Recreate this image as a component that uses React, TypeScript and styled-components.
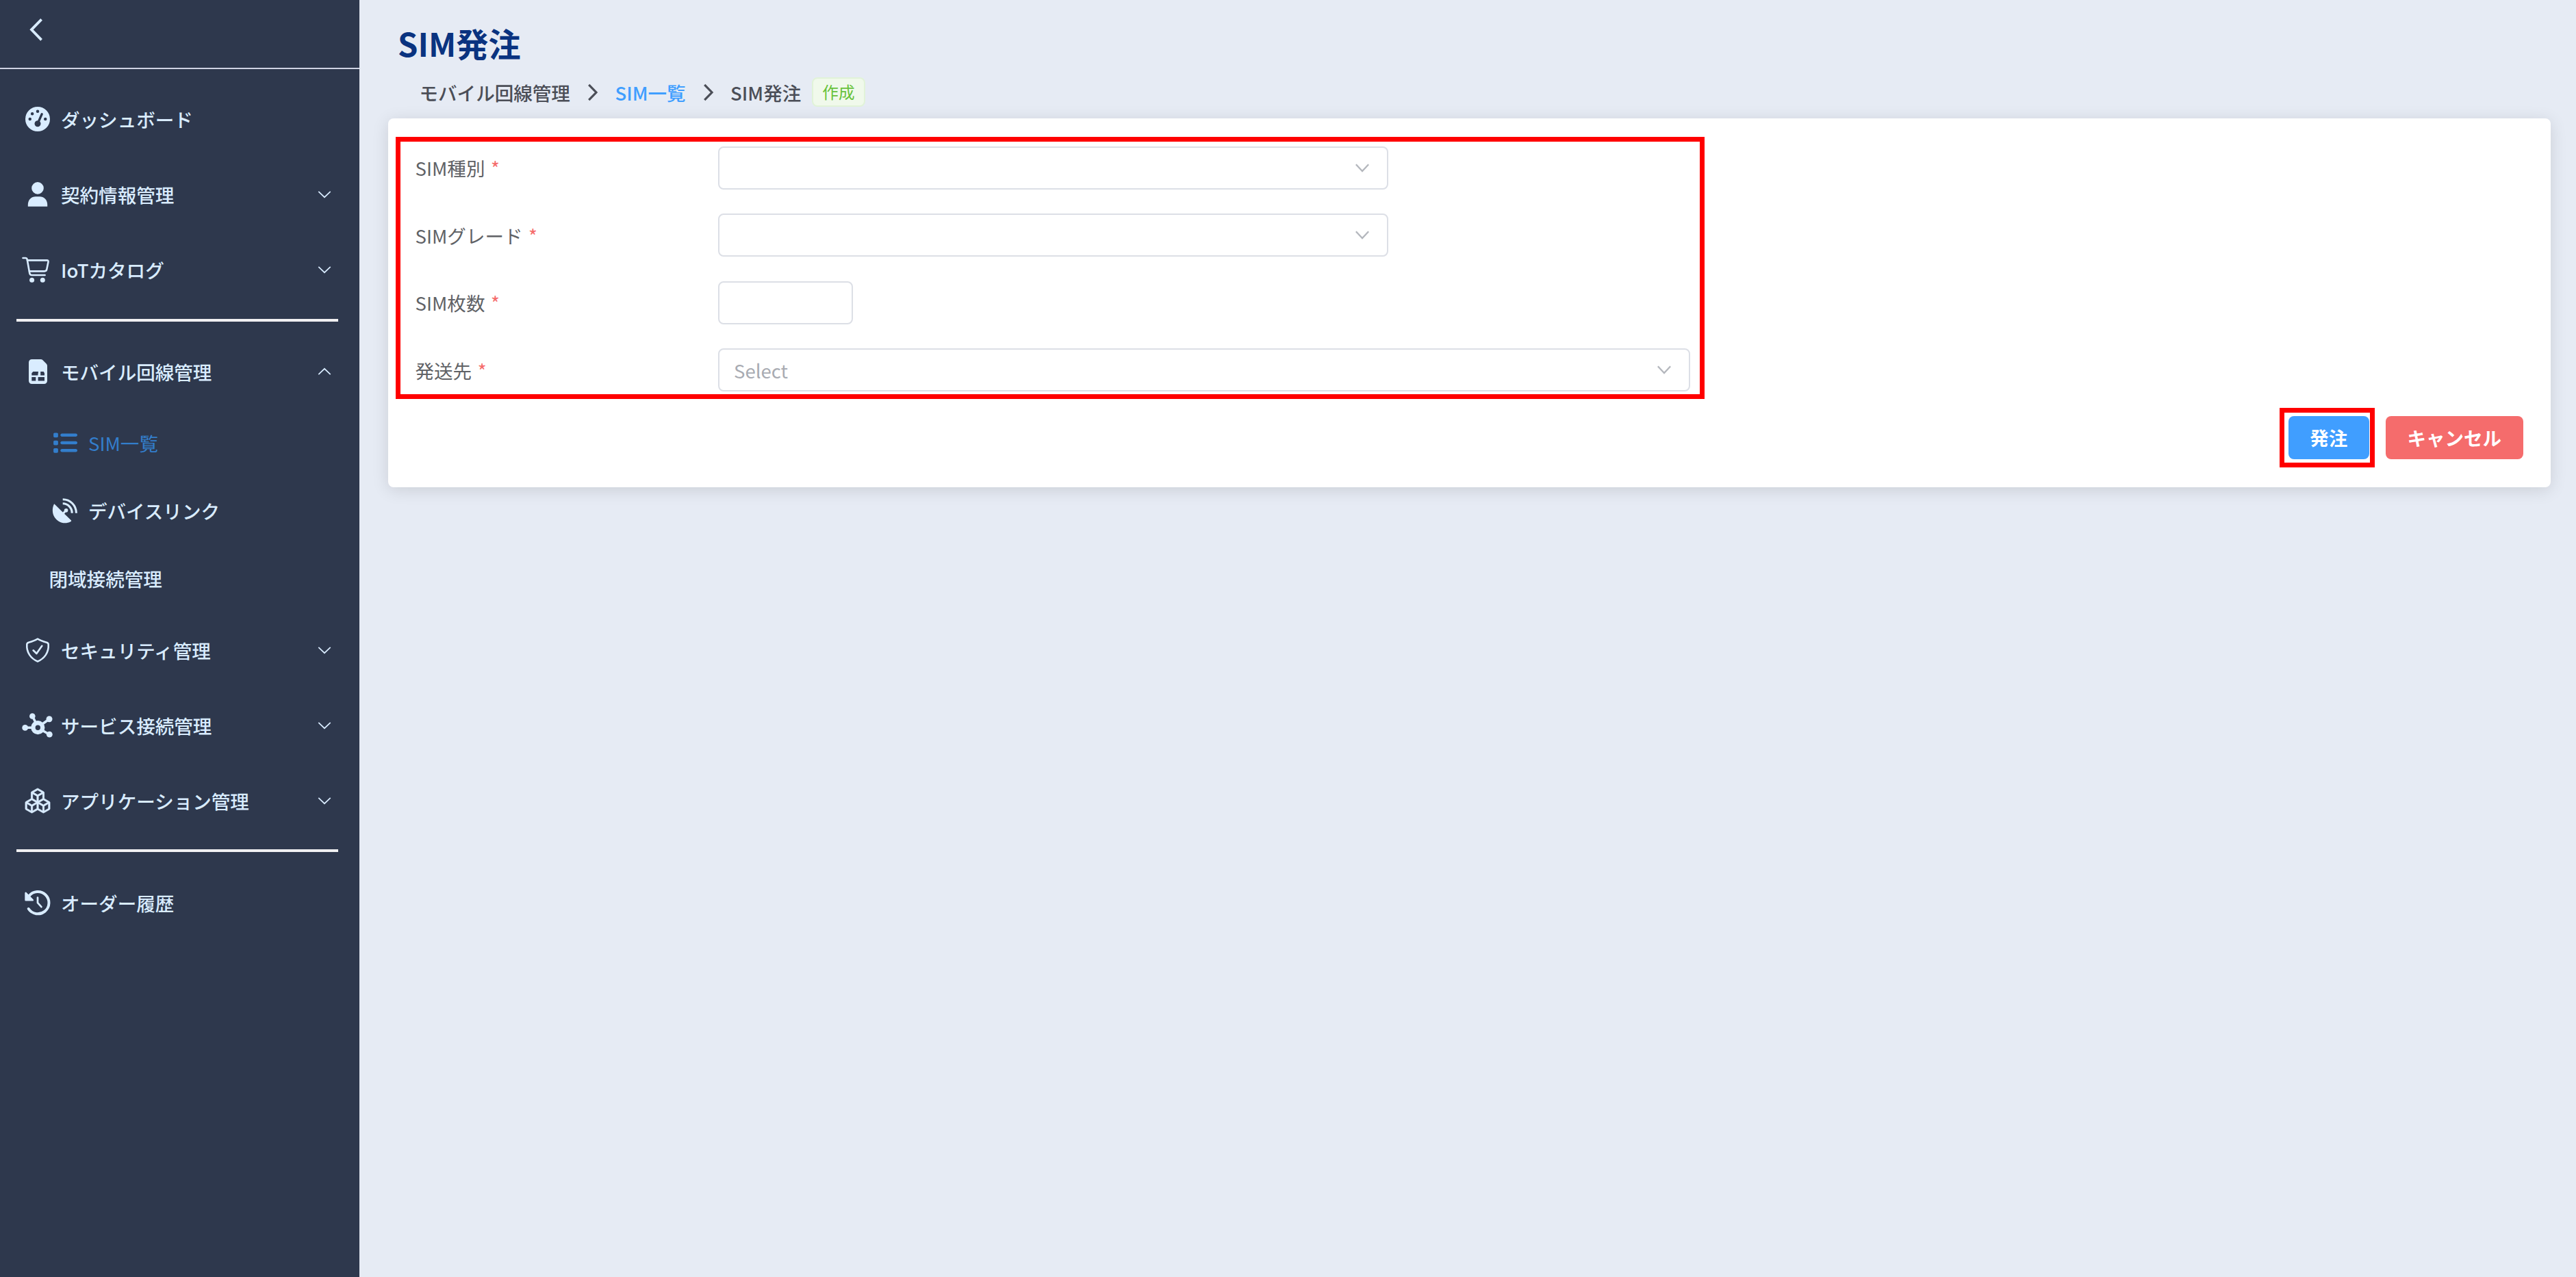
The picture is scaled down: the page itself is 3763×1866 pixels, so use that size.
import React from 'react'
import styled, { createGlobalStyle } from 'styled-components'
import { FaGaugeHigh, FaList } from 'react-icons/fa6'
import { BsBoxes } from 'react-icons/bs'

const GlobalStyle = createGlobalStyle`
  * {
    box-sizing: border-box;
  }
  body {
    margin: 0;
    background: #e6ebf4;
    font-family: "Noto Sans CJK JP", "Noto Sans", sans-serif;
    font-size: 27.55px;
    color: #606266;
  }
`

const Layout = styled.div`
  display: flex;
  min-height: 100vh;
`

// ---- sidebar ----
const Sidebar = styled.aside`
  width: 525px;
  flex: none;
  background: #2e384d;
  color: #d9ecff;
`

const SidebarHeader = styled.div`
  height: 101px;
  padding: 27px 0 0 43px;
  border-bottom: 2px solid #cfd3e2;
  margin-bottom: 17.5px;
  svg {
    display: block;
  }
`

const MenuRow = styled.div<{ $sub?: boolean; $active?: boolean; $plain?: boolean }>`
  display: flex;
  align-items: center;
  height: ${({ $sub }) => ($sub ? '98.75px' : '110.4px')};
  padding-left: ${({ $sub, $plain }) => ($plain ? '71.5px' : $sub ? '71.5px' : '31.5px')};
  padding-right: 41px;
  color: ${({ $active }) => ($active ? '#337ecc' : '#d9ecff')};
  font-weight: ${({ $active }) => ($active ? 400 : 500)};
  white-space: nowrap;
`

const MenuIcon = styled.span`
  display: flex;
  align-items: center;
  justify-content: center;
  width: 47px;
  height: 38px;
  margin-right: 10.5px;
  svg {
    flex: none;
    overflow: visible;
  }
`

const MenuLabel = styled.span`
  flex: 1;
`

const Divider = styled.hr`
  width: 470px;
  height: 4px;
  margin: 16px 0 18px 23.5px;
  border: 0;
  background: #f0f0f2;
`

// ---- content ----
const Content = styled.main`
  flex: 1;
  padding: 28px 37px 0 41.5px;
`

const Title = styled.h1`
  margin: 0 0 16px 14.5px;
  font-size: 47.2px;
  line-height: 69px;
  font-weight: 700;
  color: #0a3380;
`

const Breadcrumb = styled.nav`
  display: flex;
  align-items: center;
  height: 43px;
  margin: 0 0 17px 46px;
  color: #4b4e57;
  font-weight: 500;
  line-height: 42px;
  svg {
    margin: 0 24px 0 25.5px;
  }
`

const Crumb = styled.span<{ $link?: boolean }>`
  color: ${({ $link }) => ($link ? '#409eff' : 'inherit')};
`

const Tag = styled.span`
  margin-left: 16px;
  padding: 0 13px;
  height: 43px;
  line-height: 39px;
  border: 2px solid #e1f3d8;
  border-radius: 8px;
  background: #f0f9eb;
  color: #67c23a;
  font-size: 23.6px;
  font-weight: 400;
`

const Card = styled.section`
  position: relative;
  height: 538.5px;
  padding: 40.6px 40px 40px 40px;
  border-radius: 8px;
  background: #fff;
  box-shadow: 0 4px 24px rgba(0, 0, 0, 0.12);
`

const FormRow = styled.div`
  display: flex;
  align-items: center;
  height: 63px;
  margin-bottom: 35.6px;
`

const FormLabel = styled.label`
  width: 442px;
`

const Required = styled.span`
  margin-left: 8.5px;
  color: #f56c6c;
`

const Field = styled.div<{ $width: number }>`
  display: flex;
  align-items: center;
  justify-content: space-between;
  width: ${({ $width }) => $width}px;
  height: 63px;
  padding: 0 26px 0 21.5px;
  border: 2px solid #dcdfe6;
  border-radius: 8px;
  color: #a8abb2;
`

const Actions = styled.div`
  display: flex;
  justify-content: flex-end;
  gap: 23.5px;
`

const Button = styled.button<{ $danger?: boolean }>`
  width: ${({ $danger }) => ($danger ? '201.5px' : '118.5px')};
  height: 63px;
  padding: 0;
  border: 0;
  border-radius: 8px;
  background: ${({ $danger }) => ($danger ? '#f56c6c' : '#409eff')};
  color: #fff;
  font: inherit;
  font-weight: 700;
`

// red frames that lie over the card
const Marker = styled.div`
  position: absolute;
  border: 7px solid #ff0000;
  pointer-events: none;
`

const FormMarker = styled(Marker)`
  left: 11.5px;
  top: 27px;
  width: 1912px;
  height: 383px;
`

const SubmitMarker = styled(Marker)`
  right: 257px;
  top: 423px;
  width: 139px;
  height: 87px;
`

// ---- icons ----
const UserIcon = () => (
  <svg width="36" height="36" fill="currentColor">
    <circle cx="18" cy="8.9" r="8.8" />
    <path d="M3.8 35.7v-2.6C3.8 25.6 9 21.2 15 21.2h6c6 0 11.2 4.4 11.2 11.9v2.6z" />
  </svg>
)

const CartIcon = () => (
  <svg width="42" height="38" viewBox="2 0 42 38" fill="none" stroke="currentColor" strokeWidth="2.6" strokeLinecap="round" strokeLinejoin="round">
    <path d="M1.5 2h3.6c1.6 0 2.3.9 2.6 2.3L11.2 24c.4 2.1 1.3 3 3.2 3h19.2" />
    <path d="M8 5.4h28.6c1.6 0 2.2.9 1.9 2.3l-2.2 10.9c-.4 2-1.4 2.8-3.3 2.8H11" />
    <circle cx="14.6" cy="34.3" r="3.5" fill="currentColor" stroke="none" />
    <circle cx="30.3" cy="34.3" r="3.5" fill="currentColor" stroke="none" />
  </svg>
)

const SimIcon = () => (
  <svg width="27" height="36" fill="currentColor" fillRule="evenodd">
    <path d="M4.5 0h13c1.2 0 2.2.4 3 1.2l5.2 5.2c.9.9 1.3 1.9 1.3 3v22.1c0 2.5-2 4.5-4.5 4.5h-18C2 36 0 34 0 31.5v-27C0 2 2 0 4.5 0zM4.3 23.4h9L14 18H6.4l-2.1 2.2zM17.2 18v5.4H23v-3.2L21.6 18zM4.3 26v5.5h6V26zM13.6 26v5.5H23V26z" />
  </svg>
)

const DishIcon = () => (
  <svg width="36" height="36" fill="currentColor">
    <path d="M3 8.9l11.7 11.6 2.1-2.1a2.8 2.8 0 1 1 2.2 2.2l-2 2.2 9.6 9.1c.9.9.7 1.7-.4 2.4C17.8 38.6 8 35.9 3 28.3-.9 22.3-.9 15.5 1.5 9.4c.3-.9.9-1.1 1.5-.5z" />
    <path d="M14.7 1.7c11 0 19.7 8.9 19.7 20M14.7 7.8c7.5 0 13.5 6.2 13.5 13.9" fill="none" stroke="currentColor" strokeWidth="3.1" />
  </svg>
)

const ShieldIcon = () => (
  <svg width="36" height="36" fill="none" stroke="currentColor" strokeWidth="2.6" strokeLinecap="round" strokeLinejoin="round">
    <path d="M18 1.5c2.5 1.7 8.5 4 13 5.2 1.5.4 2.6 1.2 2.7 2.8C34.6 21.8 27.5 30.5 18 34.5 8.5 30.5 1.4 21.8 2.3 9.5 2.4 7.9 3.5 7.1 5 6.7 9.5 5.5 15.5 3.2 18 1.5z" />
    <path d="M11.6 18.3l4.8 4.7 7.9-11.2" />
  </svg>
)

const HubIcon = () => (
  <svg width="45" height="36" viewBox="1 0 45 36" fill="currentColor">
    <path d="M4.7 21.3h12M15.3 4.3l5 10M40 8.8L28.5 17M40.3 31.2l-11-6.2" stroke="currentColor" strokeWidth="3.6" />
    <circle cx="23.3" cy="21.2" r="6.9" fill="none" stroke="currentColor" strokeWidth="6.4" />
    <circle cx="4.7" cy="21.4" r="4.4" />
    <circle cx="15.3" cy="4.5" r="4.3" />
    <circle cx="40" cy="8.8" r="4.5" />
    <circle cx="40.3" cy="31.2" r="4.4" />
  </svg>
)

const HistoryIcon = () => (
  <svg width="36" height="36" fill="none" stroke="currentColor" strokeLinecap="round" strokeLinejoin="round">
    <path d="M4.7 27A16.2 16.2 0 1 0 5.4 8.3" strokeWidth="4" />
    <path d="M.6 4v10.3h10.2z" fill="currentColor" strokeWidth="2.6" />
    <path d="M18 10.6v7.6l5.4 6" strokeWidth="2.7" />
  </svg>
)

const BackIcon = () => (
  <svg width="20" height="33" fill="none" stroke="currentColor" strokeWidth="3.8">
    <path d="M17.6 1.4L3 16.3l14.6 15" />
  </svg>
)

const MenuArrow = ({ up }: { up?: boolean }) => (
  <svg width="20" height="12" fill="none" stroke="currentColor" strokeWidth="1.7">
    <path d={up ? 'M1.3 10.2L10 1.8l8.700 8.400' : 'M1.3 1.8L10 10.2l8.7-8.4'} />
  </svg>
)

const CrumbArrow = () => (
  <svg width="16" height="26" fill="none" stroke="currentColor" strokeWidth="3.2">
    <path d="M2.2 1.8L13 13 2.2 24.2" />
  </svg>
)

const SelectArrow = () => (
  <svg width="20" height="13" fill="none" stroke="#b4b7bd" strokeWidth="2.4">
    <path d="M.8 1.2L10 11l9.2-9.8" />
  </svg>
)

interface MenuItemProps {
  label: string
  icon?: React.ReactNode
  arrow?: 'up' | 'down'
  sub?: boolean
  active?: boolean
}

const MenuItem = ({ label, icon, arrow, sub, active }: MenuItemProps) => (
  <MenuRow $sub={sub} $active={active} $plain={!icon}>
    {icon && <MenuIcon>{icon}</MenuIcon>}
    <MenuLabel>{label}</MenuLabel>
    {arrow && <MenuArrow up={arrow === 'up'} />}
  </MenuRow>
)

interface FormItemProps {
  label: string
  width: number
  select?: boolean
  placeholder?: string
}

const FormItem = ({ label, width, select, placeholder }: FormItemProps) => (
  <FormRow>
    <FormLabel>
      {label}
      <Required>*</Required>
    </FormLabel>
    <Field $width={width}>
      <span>{placeholder}</span>
      {select && <SelectArrow />}
    </Field>
  </FormRow>
)

const App = () => (
  <Layout>
    <GlobalStyle />
    <Sidebar>
      <SidebarHeader>
        <BackIcon />
      </SidebarHeader>
      <MenuItem label="ダッシュボード" icon={<FaGaugeHigh size={36} />} />
      <MenuItem label="契約情報管理" icon={<UserIcon />} arrow="down" />
      <MenuItem label="IoTカタログ" icon={<CartIcon />} arrow="down" />
      <Divider />
      <MenuItem label="モバイル回線管理" icon={<SimIcon />} arrow="up" />
      <MenuItem label="SIM一覧" icon={<FaList size={36} />} sub active />
      <MenuItem label="デバイスリンク" icon={<DishIcon />} sub />
      <MenuItem label="閉域接続管理" sub />
      <MenuItem label="セキュリティ管理" icon={<ShieldIcon />} arrow="down" />
      <MenuItem label="サービス接続管理" icon={<HubIcon />} arrow="down" />
      <MenuItem label="アプリケーション管理" icon={<BsBoxes size={36} strokeWidth={0.35} />} arrow="down" />
      <Divider />
      <MenuItem label="オーダー履歴" icon={<HistoryIcon />} />
    </Sidebar>
    <Content>
      <Title>SIM発注</Title>
      <Breadcrumb>
        <Crumb>モバイル回線管理</Crumb>
        <CrumbArrow />
        <Crumb $link>SIM一覧</Crumb>
        <CrumbArrow />
        <Crumb>SIM発注</Crumb>
        <Tag>作成</Tag>
      </Breadcrumb>
      <Card>
        <FormItem label="SIM種別" width={979} select />
        <FormItem label="SIMグレード" width={979} select />
        <FormItem label="SIM枚数" width={197} />
        <FormItem label="発送先" width={1420.5} select placeholder="Select" />
        <Actions>
          <Button>発注</Button>
          <Button $danger>キャンセル</Button>
        </Actions>
        <FormMarker />
        <SubmitMarker />
      </Card>
    </Content>
  </Layout>
)

export default App
